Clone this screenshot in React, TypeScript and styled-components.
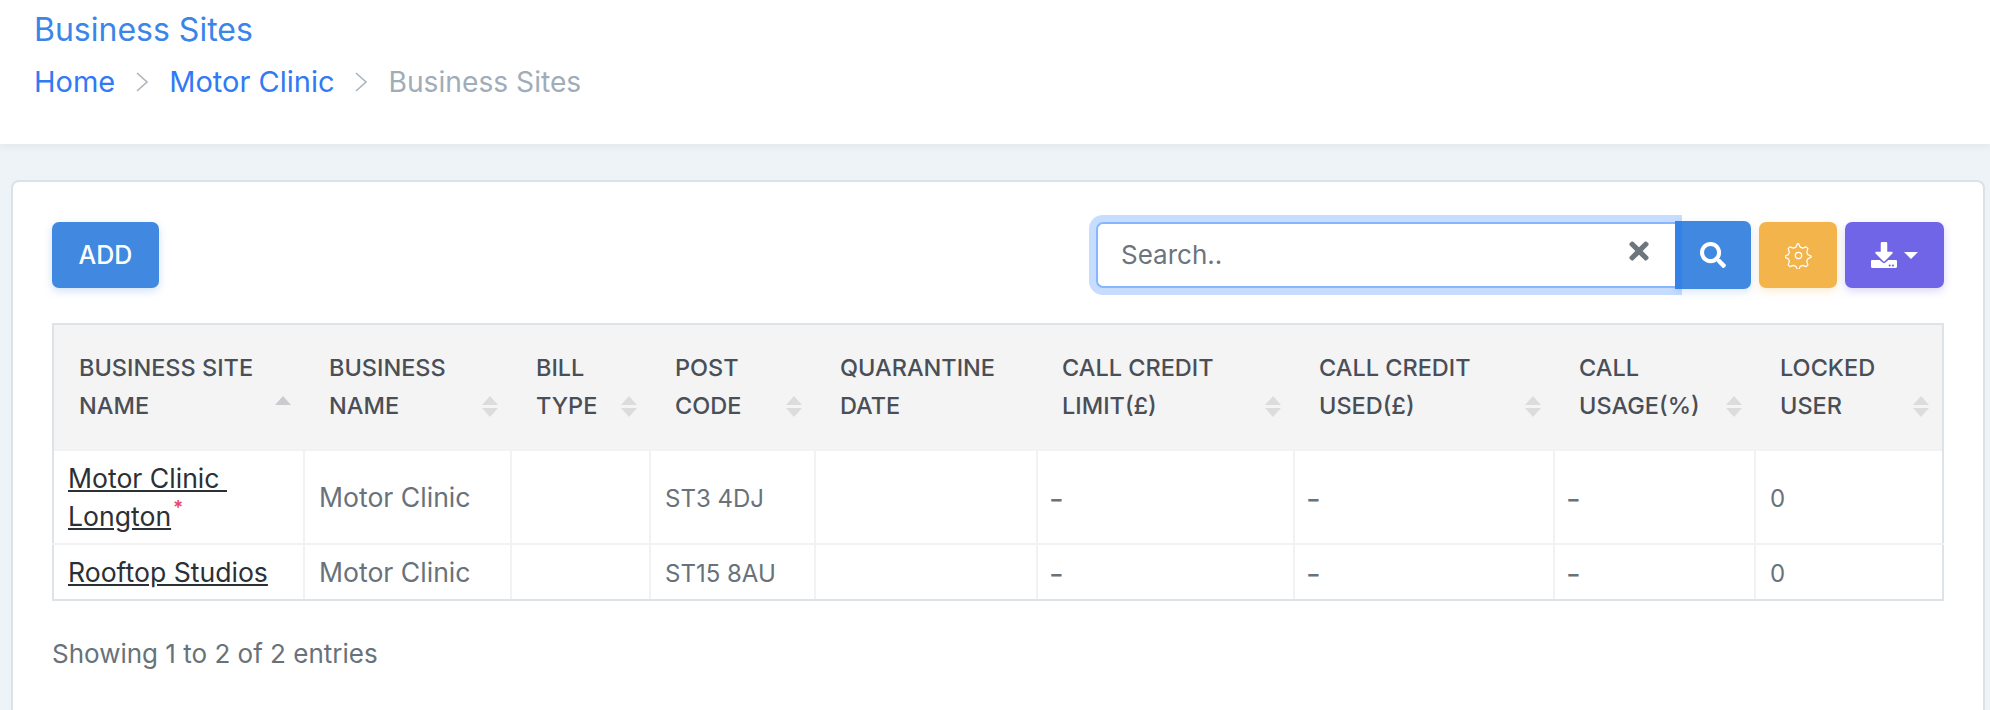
import React from "react";
import styled, { createGlobalStyle } from "styled-components";
import { FaSearch, FaTimes, FaDownload } from "react-icons/fa";

const Global = createGlobalStyle`
  html, body { margin: 0; padding: 0; height: 710px; overflow: hidden; background: #eef3f7; }
  body { font-family: Inter, "Liberation Sans", sans-serif; font-size: 24px; line-height: 38px; color: #68727a; }
  * { box-sizing: border-box; }
`;

const Header = styled.header`
  height: 144px;
  padding: 11px 34px 0;
  background: #fff;
  box-shadow: 0 2px 8px rgba(60, 80, 110, 0.08);
`;
const Title = styled.h1`
  margin: 0;
  font-size: 32px;
  line-height: 38px;
  font-weight: 400;
  color: #3a86e8;
`;
const Crumbs = styled.nav`
  display: flex;
  align-items: center;
  margin-top: 14px;
  height: 38px;
`;
const CrumbLink = styled.a`
  color: #2f7af5;
  font-size: 29px;
  text-decoration: none;
`;
const CrumbCurrent = styled.span`
  color: #a0adb8;
  font-size: 28.2px;
`;
const Chevron = styled.svg`
  width: 14px;
  height: 20px;
  margin: 0 20px 0 20px;
  fill: none;
  stroke: #a9b4bd;
  stroke-width: 1.6;
`;
const Main = styled.main`
  padding: 36px 5px 0 11px;
`;
const Card = styled.section`
  background: #fff;
  height: 540px;
  border: 2px solid #dce1e6;
  border-bottom: 0;
  border-radius: 8px 8px 0 0;
  padding: 39px 39px 0;
`;
const Toolbar = styled.div`
  display: flex;
  justify-content: space-between;
  align-items: center;
  height: 68px;
`;
const AddButton = styled.button`
  width: 107px;
  height: 66px;
  border: 0;
  border-radius: 7px;
  background: #4189e0;
  color: #fff;
  font: 500 25px/38px Inter, sans-serif;
  box-shadow: 0 3px 8px rgba(65, 137, 224, 0.25);
`;
const Tools = styled.div`
  display: flex;
  align-items: center;
`;
const SearchWrap = styled.div`
  position: relative;
  z-index: 1;
  width: 579px;
  height: 66px;
`;
const SearchInput = styled.input`
  display: block;
  width: 100%;
  height: 100%;
  padding: 0 60px 2px 23px;
  border: 2px solid #86b7fe;
  border-right: 0;
  border-radius: 7px 0 0 7px;
  outline: 0;
  box-shadow: 0 0 0 7px rgba(13, 110, 253, 0.23);
  font: 400 26px/38px Inter, sans-serif;
  color: #68727a;
  &::placeholder { color: #6c757d; opacity: 1; }
`;
const Clear = styled.span`
  position: absolute;
  right: 22px;
  top: 15px;
  display: flex;
  color: #6c767c;
  font-size: 28px;
`;
const SearchButton = styled.button`
  width: 76px;
  height: 68px;
  margin-right: 8px;
  display: flex;
  align-items: center;
  justify-content: center;
  border: 0;
  border-radius: 0 7px 7px 0;
  background: #4189e0;
  color: #fff;
  font-size: 26px;
  box-shadow: 0 3px 8px rgba(65, 137, 224, 0.2);
`;
const ToolButton = styled.button<{ $bg: string; $w: number }>`
  width: ${(p) => p.$w}px;
  height: 66px;
  display: flex;
  align-items: center;
  justify-content: center;
  gap: 7px;
  border: 0;
  border-radius: 7px;
  color: #fff;
  background: ${(p) => p.$bg};
  box-shadow: 0 3px 8px ${(p) => p.$bg}44;
  & + & { margin-left: 8px; }
`;
const Caret = styled.i`
  width: 0;
  height: 0;
  border-left: 7px solid transparent;
  border-right: 7px solid transparent;
  border-top: 7px solid #fff;
`;
const Table = styled.table`
  width: 1890px;
  margin-top: 34px;
  table-layout: fixed;
  border-collapse: collapse;
  border: 2px solid #dee3e8;
`;
const Th = styled.th`
  position: relative;
  height: 126px;
  padding: 0 38px 0 25px;
  background: #f4f4f4;
  text-align: left;
  vertical-align: middle;
  font-size: 23.5px;
  font-weight: 500;
  color: #4a4f57;
`;
const Td = styled.td<{ $kind?: "text" | "dash" }>`
  padding: ${(p) => (p.$kind === "text" ? "8px 14px" : "10px 14px 6px")};
  padding-left: ${(p) => (p.$kind === "dash" ? "11px" : "14px")};
  border: 2px solid #f0f2f4;
  vertical-align: middle;
  font-size: ${(p) => (p.$kind === "text" ? "26.6px" : p.$kind === "dash" ? "32px" : "24px")};
  &:first-child { border-left-color: #dee3e8; }
  &:last-child { border-right-color: #dee3e8; }
  tr:last-child > & { border-bottom-color: #dee3e8; }
`;
const SiteLink = styled.a`
  color: #2b3036;
  text-decoration: underline;
`;
const Required = styled.sup`
  position: relative;
  top: -2px;
  left: 2px;
  color: #e8456b;
  font-size: 19px;
  font-weight: 600;
  line-height: 0;
`;
const Sort = styled.svg`
  position: absolute;
  right: 13px;
  top: 71px;
  width: 16px;
  height: 21px;
`;
const Info = styled.p`
  margin: 34px 0 0;
  font-size: 26px;
`;

const cols = [251, 207, 139, 165, 222, 257, 260, 201, 188];
const heads: [string, boolean][] = [
  ["BUSINESS SITE NAME", true],
  ["BUSINESS NAME", false],
  ["BILL TYPE", false],
  ["POST CODE", false],
  ["QUARANTINE DATE", false],
  ["CALL CREDIT LIMIT(£)", false],
  ["CALL CREDIT USED(£)", false],
  ["CALL USAGE(%)", false],
  ["LOCKED USER", false],
];
const rows = [
  { name: "Motor Clinic\u00a0\u200bLongton", req: true, post: "ST3 4DJ" },
  { name: "Rooftop Studios", req: false, post: "ST15 8AU" },
];

const Chev = () => (
  <Chevron viewBox="0 0 14 20"><polyline points="2,1 12,10 2,19" /></Chevron>
);
const SortIcon = ({ asc }: { asc: boolean }) => (
  <Sort viewBox="0 0 16 21">
    <path d="M8 0 L16 9 H0 Z" fill={asc ? "#c9cbcf" : "#dcdcdc"} />
    {!asc && <path d="M8 21 L16 12 H0 Z" fill="#dcdcdc" />}
  </Sort>
);

export default function App() {
  return (
    <>
      <Global />
      <Header>
        <Title>Business Sites</Title>
        <Crumbs>
          <CrumbLink>Home</CrumbLink>
          <Chev />
          <CrumbLink>Motor Clinic</CrumbLink>
          <Chev />
          <CrumbCurrent>Business Sites</CrumbCurrent>
        </Crumbs>
      </Header>
      <Main>
        <Card>
          <Toolbar>
            <AddButton>ADD</AddButton>
            <Tools>
              <SearchWrap>
                <SearchInput placeholder="Search.." />
                <Clear><FaTimes /></Clear>
              </SearchWrap>
              <SearchButton><FaSearch /></SearchButton>
              <ToolButton $bg="#f4b44c" $w={78}>
                <svg width="27" height="27" viewBox="0 0 24 24" fill="none" stroke="#fff" strokeWidth="1.1" strokeLinejoin="round">
                  <circle cx="12" cy="12" r="2.8" />
                  <path d="M12 1.5l1.5 3 2.2.9 3.1-1.1 1.6 1.6-1.1 3.1.9 2.2 3 1.3v1l-3 1.5-.9 2.2 1.1 3.1-1.6 1.6-3.1-1.1-2.2.9-1.3 3h-1l-1.5-3-2.2-.9-3.1 1.1-1.6-1.6 1.1-3.1-.9-2.2-3-1.3v-1l3-1.5.9-2.2-1.1-3.1 1.6-1.6 3.1 1.1 2.2-.9 1.3-3z" />
                </svg>
              </ToolButton>
              <ToolButton $bg="#7065e6" $w={99}>
                <FaDownload size={26} />
                <Caret />
              </ToolButton>
            </Tools>
          </Toolbar>
          <Table>
            <colgroup>
              {cols.map((w, i) => <col key={i} style={{ width: w }} />)}
            </colgroup>
            <thead>
              <tr>
                {heads.map(([h, asc], i) => (
                  <Th key={i}>
                    {h}
                    {i !== 4 && <SortIcon asc={asc} />}
                  </Th>
                ))}
              </tr>
            </thead>
            <tbody>
              {rows.map((r) => (
                <tr key={r.name}>
                  <Td $kind="text">
                    <SiteLink>{r.name}</SiteLink>
                    {r.req && <Required>*</Required>}
                  </Td>
                  <Td $kind="text">Motor Clinic</Td>
                  <Td />
                  <Td>{r.post}</Td>
                  <Td />
                  <Td $kind="dash">-</Td>
                  <Td $kind="dash">-</Td>
                  <Td $kind="dash">-</Td>
                  <Td>0</Td>
                </tr>
              ))}
            </tbody>
          </Table>
          <Info>Showing 1 to 2 of 2 entries</Info>
        </Card>
      </Main>
    </>
  );
}
